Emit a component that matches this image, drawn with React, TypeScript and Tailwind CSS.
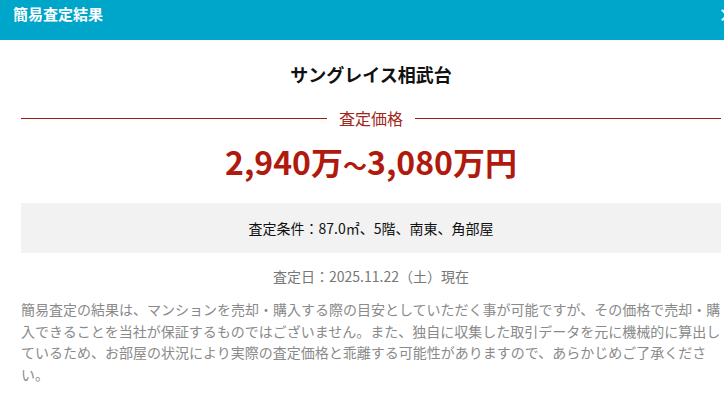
import React from "react";

const font = { fontFamily: '"Noto Sans CJK JP", "Noto Sans", sans-serif' };

export default function App() {
  return (
    <div className="h-[404px] w-[724px] overflow-hidden bg-white" style={font}>
      <div className="w-[742px]">
        {/* Header */}
        <div className="flex h-10 items-start justify-between bg-[#00a6ca] pl-[13px] pr-[6px] pt-[3px]">
          <h2 className="text-[15px] font-bold leading-[22px] text-white">簡易査定結果</h2>
          <span className="text-[18px] font-bold leading-[22px] text-white">×</span>
        </div>

        {/* Body */}
        <div className="px-[21px] pt-5">
          <h3 className="text-center text-[18px] font-bold leading-[28px] text-[#111]">
            サングレイス相武台
          </h3>

          <div className="mt-[18px] flex items-center gap-3">
            <div className="h-px flex-1 bg-[#9a1c12]" />
            <span className="text-[16px] leading-6 text-[#a3261b]">査定価格</span>
            <div className="h-px flex-1 bg-[#9a1c12]" />
          </div>

          <p className="mt-[11px] text-center text-[32px] font-bold leading-[40px] text-[#b01a0e]">
            2,940万<span className="text-[24px]">～</span>3,080万円
          </p>

          <div className="mt-[18px] flex h-[50px] items-center justify-center bg-[#f2f2f2] text-[14px] text-[#111]">
            査定条件：87.0㎡、5階、南東、角部屋
          </div>

          <p className="mt-[13px] text-center text-[14px] leading-[21px] text-[#777]">
            査定日：2025.11.22（土）現在
          </p>

          <p className="mt-[12px] text-[14px] leading-[21.5px] text-[#8a8a8a]">
            簡易査定の結果は、マンションを売却・購入する際の目安としていただく事が可能ですが、その価格で売却・購入できることを当社が保証するものではございません。また、独自に収集した取引データを元に機械的に算出しているため、お部屋の状況により実際の査定価格と乖離する可能性がありますので、あらかじめご了承ください。
          </p>
        </div>
      </div>
    </div>
  );
}
